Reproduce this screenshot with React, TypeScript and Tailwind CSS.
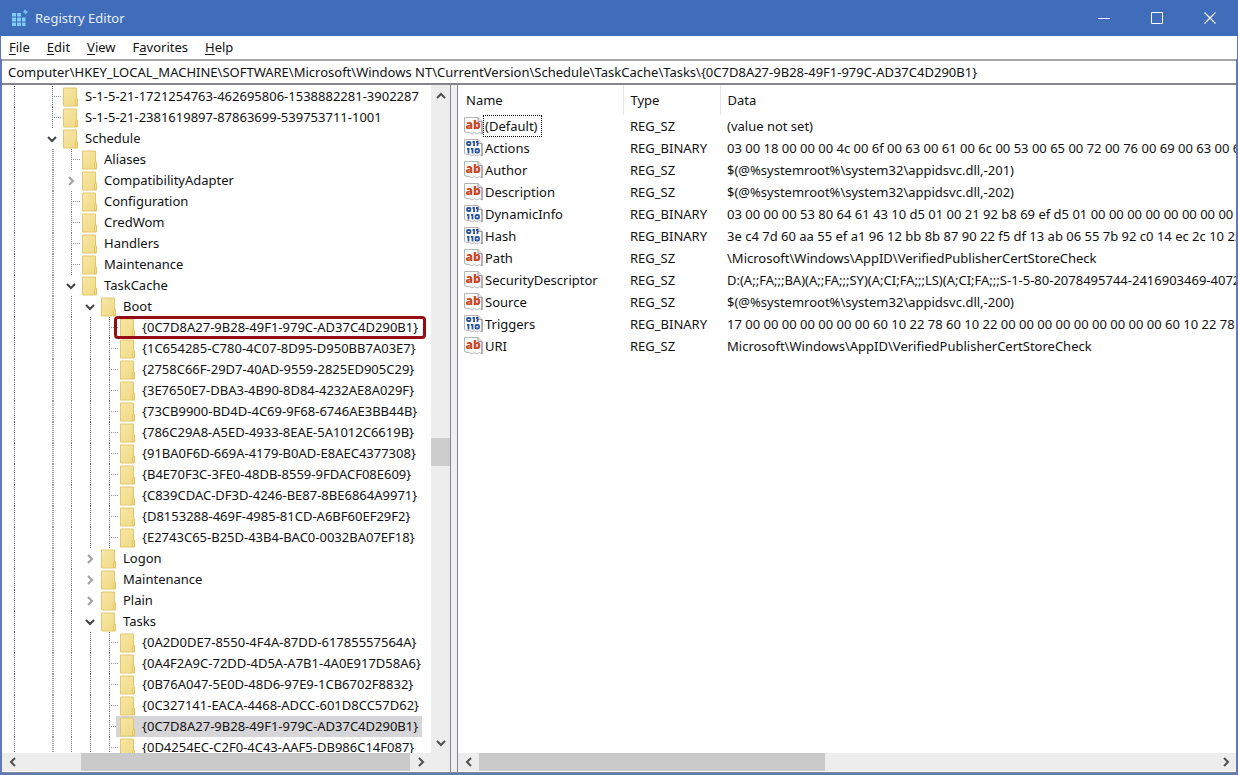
import React from "react";

type Node = { label: string; depth: number; state?: "open" | "closed"; selected?: boolean; marked?: boolean };

const boot = [
  "{1C654285-C780-4C07-8D95-D950BB7A03E7}",
  "{2758C66F-29D7-40AD-9559-2825ED905C29}",
  "{3E7650E7-DBA3-4B90-8D84-4232AE8A029F}",
  "{73CB9900-BD4D-4C69-9F68-6746AE3BB44B}",
  "{786C29A8-A5ED-4933-8EAE-5A1012C6619B}",
  "{91BA0F6D-669A-4179-B0AD-E8AEC4377308}",
  "{B4E70F3C-3FE0-48DB-8559-9FDACF08E609}",
  "{C839CDAC-DF3D-4246-BE87-8BE6864A9971}",
  "{D8153288-469F-4985-81CD-A6BF60EF29F2}",
  "{E2743C65-B25D-43B4-BAC0-0032BA07EF18}",
];

const nodes: Node[] = [
  { label: "S-1-5-21-1721254763-462695806-1538882281-3902287", depth: 2 },
  { label: "S-1-5-21-2381619897-87863699-539753711-1001", depth: 2 },
  { label: "Schedule", depth: 2, state: "open" },
  { label: "Aliases", depth: 3 },
  { label: "CompatibilityAdapter", depth: 3, state: "closed" },
  { label: "Configuration", depth: 3 },
  { label: "CredWom", depth: 3 },
  { label: "Handlers", depth: 3 },
  { label: "Maintenance", depth: 3 },
  { label: "TaskCache", depth: 3, state: "open" },
  { label: "Boot", depth: 4, state: "open" },
  { label: "{0C7D8A27-9B28-49F1-979C-AD37C4D290B1}", depth: 5, marked: true },
  ...boot.map((label) => ({ label, depth: 5 })),
  { label: "Logon", depth: 4, state: "closed" },
  { label: "Maintenance", depth: 4, state: "closed" },
  { label: "Plain", depth: 4, state: "closed" },
  { label: "Tasks", depth: 4, state: "open" },
  { label: "{0A2D0DE7-8550-4F4A-87DD-61785557564A}", depth: 5 },
  { label: "{0A4F2A9C-72DD-4D5A-A7B1-4A0E917D58A6}", depth: 5 },
  { label: "{0B76A047-5E0D-48D6-97E9-1CB6702F8832}", depth: 5 },
  { label: "{0C327141-EACA-4468-ADCC-601D8CC57D62}", depth: 5 },
  { label: "{0C7D8A27-9B28-49F1-979C-AD37C4D290B1}", depth: 5, selected: true },
  { label: "{0D4254EC-C2F0-4C43-AAF5-DB986C14F087}", depth: 5 },
];

const values: [string, string, string][] = [
  ["(Default)", "REG_SZ", "(value not set)"],
  ["Actions", "REG_BINARY", "03 00 18 00 00 00 4c 00 6f 00 63 00 61 00 6c 00 53 00 65 00 72 00 76 00 69 00 63 00 65 00"],
  ["Author", "REG_SZ", "$(@%systemroot%\\system32\\appidsvc.dll,-201)"],
  ["Description", "REG_SZ", "$(@%systemroot%\\system32\\appidsvc.dll,-202)"],
  ["DynamicInfo", "REG_BINARY", "03 00 00 00 53 80 64 61 43 10 d5 01 00 21 92 b8 69 ef d5 01 00 00 00 00 00 00 00 00 f6 7b"],
  ["Hash", "REG_BINARY", "3e c4 7d 60 aa 55 ef a1 96 12 bb 8b 87 90 22 f5 df 13 ab 06 55 7b 92 c0 14 ec 2c 10 25"],
  ["Path", "REG_SZ", "\\Microsoft\\Windows\\AppID\\VerifiedPublisherCertStoreCheck"],
  ["SecurityDescriptor", "REG_SZ", "D:(A;;FA;;;BA)(A;;FA;;;SY)(A;CI;FA;;;LS)(A;CI;FA;;;S-1-5-80-2078495744-2416903469-4072184685"],
  ["Source", "REG_SZ", "$(@%systemroot%\\system32\\appidsvc.dll,-200)"],
  ["Triggers", "REG_BINARY", "17 00 00 00 00 00 00 00 60 10 22 78 60 10 22 00 00 00 00 00 00 00 00 00 60 10 22 78"],
  ["URI", "REG_SZ", "Microsoft\\Windows\\AppID\\VerifiedPublisherCertStoreCheck"],
];

const points = { left: "8,2 4,6 8,10", right: "4,2 8,6 4,10", up: "2,8 6,4 10,8", down: "2,4 6,8 10,4" };

function Chevron({ dir, className = "text-[#505050]" }: { dir: keyof typeof points; className?: string }) {
  return (
    <svg viewBox="0 0 12 12" className={`size-3 shrink-0 ${className}`} fill="none" stroke="currentColor" strokeWidth="2" aria-hidden="true">
      <polyline points={points[dir]} />
    </svg>
  );
}

function Folder() {
  return (
    <svg viewBox="0 0 16 20" className="h-5 w-4 shrink-0" aria-hidden="true">
      <defs>
        <linearGradient id="folder" x1="0" y1="0" x2="1" y2="1">
          <stop offset="0" stopColor="#f8e7a6" />
          <stop offset="1" stopColor="#efd983" />
        </linearGradient>
      </defs>
      <path d="M.5 1H13.500V12.500L14.500 13.500V19H.5Z" fill="url(#folder)" stroke="#e3c770" />
      <path d="M12.500 18.500V13L13.500 12H14.500V18.500Z" fill="#f3dc8c" stroke="#dfc05f" strokeWidth=".8" />
    </svg>
  );
}

function ValueIcon({ binary }: { binary: boolean }) {
  return (
    <svg viewBox="0 0 19 18" className="h-[18px] w-[19px] shrink-0" aria-hidden="true">
      <path d="M.5.5H14L18 4.500V17L15.500 15.500L13 17L10.500 15.500L8 17L5.500 15.500L3 15.500L.5 14.500Z" fill="#fdfdfd" stroke="#b4b4b4" />
      <path d="M14 .5V4.500H18" fill="#e4e4e4" stroke="#999" />
      <path d="M18 4.500V17" stroke="#8a8a8a" />
      {binary ? (
        <g fill="none" stroke="#2b55a8" strokeWidth="1.800">
          <rect x="3" y="3" width="3.500" height="3" rx="1" />
          <path d="M10 2V7M13.500 2V7M8.500 3H10M12 3H13.500" />
          <path d="M4.500 9V14.500M8.500 9V14.500M3 10H4.500M7 10H8.500" />
          <rect x="11.500" y="10" width="3.500" height="3.500" rx="1" />
        </g>
      ) : (
        <text x="1.500" y="11.500" fontFamily="Open Sans, sans-serif" fontWeight="800" fontSize="12" fill="#c8492a">ab</text>
      )}
    </svg>
  );
}

const dotsV = "bg-[repeating-linear-gradient(to_bottom,#777_0_1px,transparent_1px_2px)]";
const dotsH = "bg-[repeating-linear-gradient(to_right,#999_0_1px,transparent_1px_2px)]";

function TreeRow({ node }: { node: Node }) {
  return (
    <li role="treeitem" aria-level={node.depth + 1} aria-selected={!!node.selected} aria-expanded={node.state ? node.state === "open" : undefined} className="flex h-[21px] shrink-0">
      {Array.from({ length: node.depth }, (_, i) => (
        <span key={i} className="flex w-[19px] shrink-0 pl-2">
          {i !== 1 && <span className={i === 2 ? `w-0.5 opacity-70 ${dotsV}` : `w-px ${dotsV}`} />}
        </span>
      ))}
      {node.state ? (
        <button aria-label={`${node.state === "open" ? "Collapse" : "Expand"} ${node.label}`} className="flex w-[19px] shrink-0 items-center pl-0.5">
          <Chevron dir={node.state === "open" ? "down" : "right"} className={node.state === "open" ? "text-[#444]" : "text-[#a0a0a0]"} />
        </button>
      ) : (
        <span className="flex w-[19px] shrink-0 items-center pl-2">
          <span className={`w-px self-stretch ${dotsV}`} />
          <span className={`ml-px h-px w-[7px] ${dotsH}`} />
        </span>
      )}
      <span className={`relative flex items-center gap-1.5 whitespace-nowrap pr-1 ${node.selected ? "bg-[#d6d6d8]" : ""}`}>
        {node.selected && <span className="absolute inset-y-0 right-full w-1 bg-[#d6d6d8]" />}
        <Folder />
        {node.label}
        {node.marked && <span className="absolute -inset-y-px -left-1.5 -right-1 rounded-sm border-[3px] border-[#960d18]" />}
      </span>
    </li>
  );
}

function HScroll({ thumb }: { thumb: React.ReactNode }) {
  return (
    <div className="flex h-[18px] shrink-0 bg-[#ededed]">
      <button aria-label="Scroll left" className="flex w-[21px] items-center justify-center"><Chevron dir="left" /></button>
      <div className="flex min-w-0 flex-1">{thumb}</div>
      <button aria-label="Scroll right" className="flex w-[21px] items-center justify-center"><Chevron dir="right" /></button>
    </div>
  );
}

export default function App() {
  return (
    <div className="flex h-screen flex-col overflow-hidden bg-[#6079b8] font-['Noto_Sans','Open_Sans',sans-serif] text-[13px] leading-[21px] text-[#111]">
      <header className="flex h-9 shrink-0 items-center bg-[#3f6dba] pl-[11px] pr-0.5 text-[#e6edf9]">
        <svg viewBox="0 0 18 18" className="size-[18px]" aria-hidden="true">
          <g fill="#7fcdf5">
            <path d="M1 4h4v3.500H1zM6 4h4v3.500H6z" />
            <path d="M1 8.500h4v4H1zM6 8.500h4v4H6zM11 8.500h3.500v4H11z" />
            <path d="M1 13.500h4V17H1zM6 13.500h4V17H6zM11 13.500h3.500V17H11z" />
            <path d="M14 .5 17 3 14.500 5.500 12 3Z" opacity=".8" />
          </g>
          <path d="M11 4.500h3V7.500h-3z" fill="#3175b5" />
        </svg>
        <h1 className="ml-1.5 flex-1">Registry Editor</h1>
        <button aria-label="Minimize" className="flex h-9 w-[53px] items-center justify-center">
          <svg viewBox="0 0 12 12" className="size-3" stroke="#fff"><path d="M0 6.500H12" /></svg>
        </button>
        <button aria-label="Maximize" className="flex h-9 w-[53px] items-center justify-center">
          <svg viewBox="0 0 12 12" className="size-3" fill="none" stroke="#fff"><path d="M.5.5H11.500V11.500H.5Z" /></svg>
        </button>
        <button aria-label="Close" className="flex h-9 w-[53px] items-center justify-center">
          <svg viewBox="0 0 12 12" className="size-3" stroke="#fff" strokeWidth="1.200"><path d="M.5.5 11.500 11.500M11.500.5.5 11.500" /></svg>
        </button>
      </header>

      <nav className="mx-px flex h-[23px] shrink-0 items-center gap-[17px] bg-white pl-2" aria-label="Menu bar">
        <button><u className="underline-offset-2">F</u>ile</button>
        <button><u className="underline-offset-2">E</u>dit</button>
        <button><u className="underline-offset-2">V</u>iew</button>
        <button>F<u className="underline-offset-2">a</u>vorites</button>
        <button><u className="underline-offset-2">H</u>elp</button>
      </nav>

      <div className="mx-0.5 h-[26px] shrink-0 border-y-2 border-t-[#a5a5a5] border-b-[#87858a] bg-white">
        <input aria-label="Address" readOnly className="block h-full w-full bg-transparent pl-1.5 outline-none" value="Computer\HKEY_LOCAL_MACHINE\SOFTWARE\Microsoft\Windows NT\CurrentVersion\Schedule\TaskCache\Tasks\{0C7D8A27-9B28-49F1-979C-AD37C4D290B1}" />
      </div>

      <main className="mx-0.5 mb-0.5 flex min-h-0 flex-1 border-b border-[#858590] bg-[#f0f0f0]">
        <section className="flex w-[449px] shrink-0 flex-col border-r border-[#85858d] bg-white pb-px">
          <div className="flex min-h-0 flex-1">
            <ul role="tree" aria-label="Registry keys" className="flex min-w-0 flex-1 flex-col overflow-hidden pl-1 pt-px">
              {nodes.map((n, i) => <TreeRow key={i} node={n} />)}
            </ul>
            <div className="flex w-[19px] shrink-0 flex-col bg-[#ededed]">
              <button aria-label="Scroll up" className="flex h-[21px] items-center justify-center"><Chevron dir="up" /></button>
              <div className="flex min-h-0 flex-1 flex-col">
                <div className="h-[53%]" />
                <div className="h-7 bg-[#cdcdcd]" />
              </div>
              <button aria-label="Scroll down" className="flex h-[21px] items-center justify-center"><Chevron dir="down" /></button>
            </div>
          </div>
          <div className="flex shrink-0">
            <div className="min-w-0 flex-1">
              <HScroll thumb={<><div className="w-[15%]" /><div className="flex-1 bg-[#cacaca]" /></>} />
            </div>
            <div className="w-[19px] bg-[#ededed]" />
          </div>
        </section>

        <section className="ml-1.5 flex min-w-0 flex-1 flex-col border-l border-[#85858d] bg-white pb-px">
          <div className="min-h-0 flex-1 overflow-hidden">
            <table className="w-full table-fixed border-collapse text-left">
              <thead>
                <tr className="h-[30px]">
                  <th className="w-[165px] border-r border-[#e4e4e4] pl-2 font-normal">Name</th>
                  <th className="w-[97px] border-r border-[#e4e4e4] pl-[7px] font-normal">Type</th>
                  <th className="pl-[7px] font-normal">Data</th>
                </tr>
              </thead>
              <tbody>
                {values.map(([name, type, data], i) => (
                  <tr key={name} className="h-[22px]">
                    <td className="p-0">
                      <div className="flex h-[22px] items-center pl-1.5">
                        <ValueIcon binary={type === "REG_BINARY"} />
                        <span className={`whitespace-nowrap border px-px leading-5 ${i === 0 ? "border-dotted border-black pr-1" : "border-transparent"}`}>{name}</span>
                      </div>
                    </td>
                    <td className="p-0 pl-[7px]">{type}</td>
                    <td className="overflow-hidden whitespace-nowrap p-0 pl-[7px]">{data}</td>
                  </tr>
                ))}
              </tbody>
            </table>
          </div>
          <HScroll thumb={<div className="w-[47%] bg-[#cacaca]" />} />
        </section>
      </main>
    </div>
  );
}
